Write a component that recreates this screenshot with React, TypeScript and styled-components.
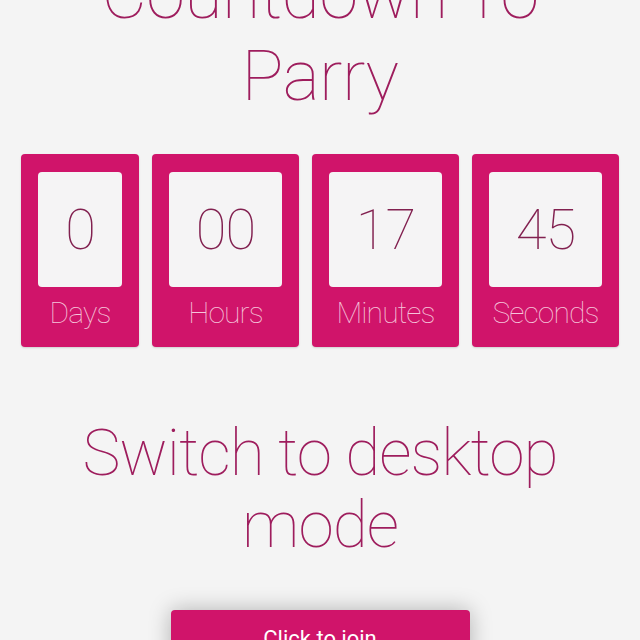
import React from "react";
import styled, { createGlobalStyle } from "styled-components";

const Global = createGlobalStyle`
  html, body { margin: 0; padding: 0; background: #f4f4f4; }
  body { font-family: Roboto, "Noto Sans", sans-serif; overflow: hidden; }
`;

const Page = styled.main`
  width: 640px;
  height: 640px;
  overflow: hidden;
  background: #f4f4f4;
  display: flex;
  flex-direction: column;
  align-items: center;
`;

const Title = styled.h1`
  margin: -47px 0 0;
  font-family: Roboto, sans-serif;
  font-weight: 100;
  font-size: 70px;
  line-height: 82px;
  letter-spacing: -0.5px;
  color: #9e1d5d;
  text-align: center;
  width: 560px;
`;

const Timer = styled.div`
  margin-top: 37px;
  display: flex;
  gap: 13px;
  justify-content: center;
`;

const Card = styled.div<{ $w: number }>`
  width: ${(p) => p.$w}px;
  box-sizing: border-box;
  background: #d0146a;
  border-radius: 4px;
  padding: 18px 17px 16px;
  display: flex;
  flex-direction: column;
  align-items: stretch;
  box-shadow: 0 1px 2px rgba(0, 0, 0, 0.15);
`;

const Face = styled.div`
  height: 115px;
  background: #f5f4f5;
  border-radius: 4px;
  display: flex;
  align-items: center;
  justify-content: center;
  font-weight: 100;
  font-size: 56px;
  letter-spacing: -1px;
  color: #822150;
  padding-top: 1px;
  box-sizing: border-box;
`;

const Label = styled.div`
  margin-top: 8px;
  font-weight: 100;
  font-size: 30px;
  line-height: 36px;
  letter-spacing: -0.9px;
  color: #f5c4da;
  text-align: center;
  white-space: nowrap;
`;

const Notice = styled.h2`
  margin: 71px 0 0;
  font-weight: 100;
  font-size: 64px;
  line-height: 72px;
  letter-spacing: -1px;
  color: #9e1d5d;
  text-align: center;
  width: 520px;
`;

const JoinButton = styled.button`
  margin-top: 48px;
  width: 299px;
  height: 60px;
  flex-shrink: 0;
  border: none;
  border-radius: 4px;
  background: #d0146a;
  color: #ffffff;
  font-family: Roboto, sans-serif;
  font-weight: 400;
  font-size: 22px;
  padding: 16px 0 0;
  display: flex;
  justify-content: center;
  align-items: flex-start;
  box-shadow: 0 0 22px rgba(0, 0, 0, 0.28);
`;

const units = [
  { value: "0", label: "Days", w: 118 },
  { value: "00", label: "Hours", w: 147 },
  { value: "17", label: "Minutes", w: 147 },
  { value: "45", label: "Seconds", w: 147 },
];

export default function App() {
  return (
    <Page>
      <Global />
      <Title>Countdown To Parry</Title>
      <Timer>
        {units.map((u) => (
          <Card key={u.label} $w={u.w}>
            <Face>{u.value}</Face>
            <Label>{u.label}</Label>
          </Card>
        ))}
      </Timer>
      <Notice>Switch to desktop mode</Notice>
      <JoinButton>Click to join</JoinButton>
    </Page>
  );
}
